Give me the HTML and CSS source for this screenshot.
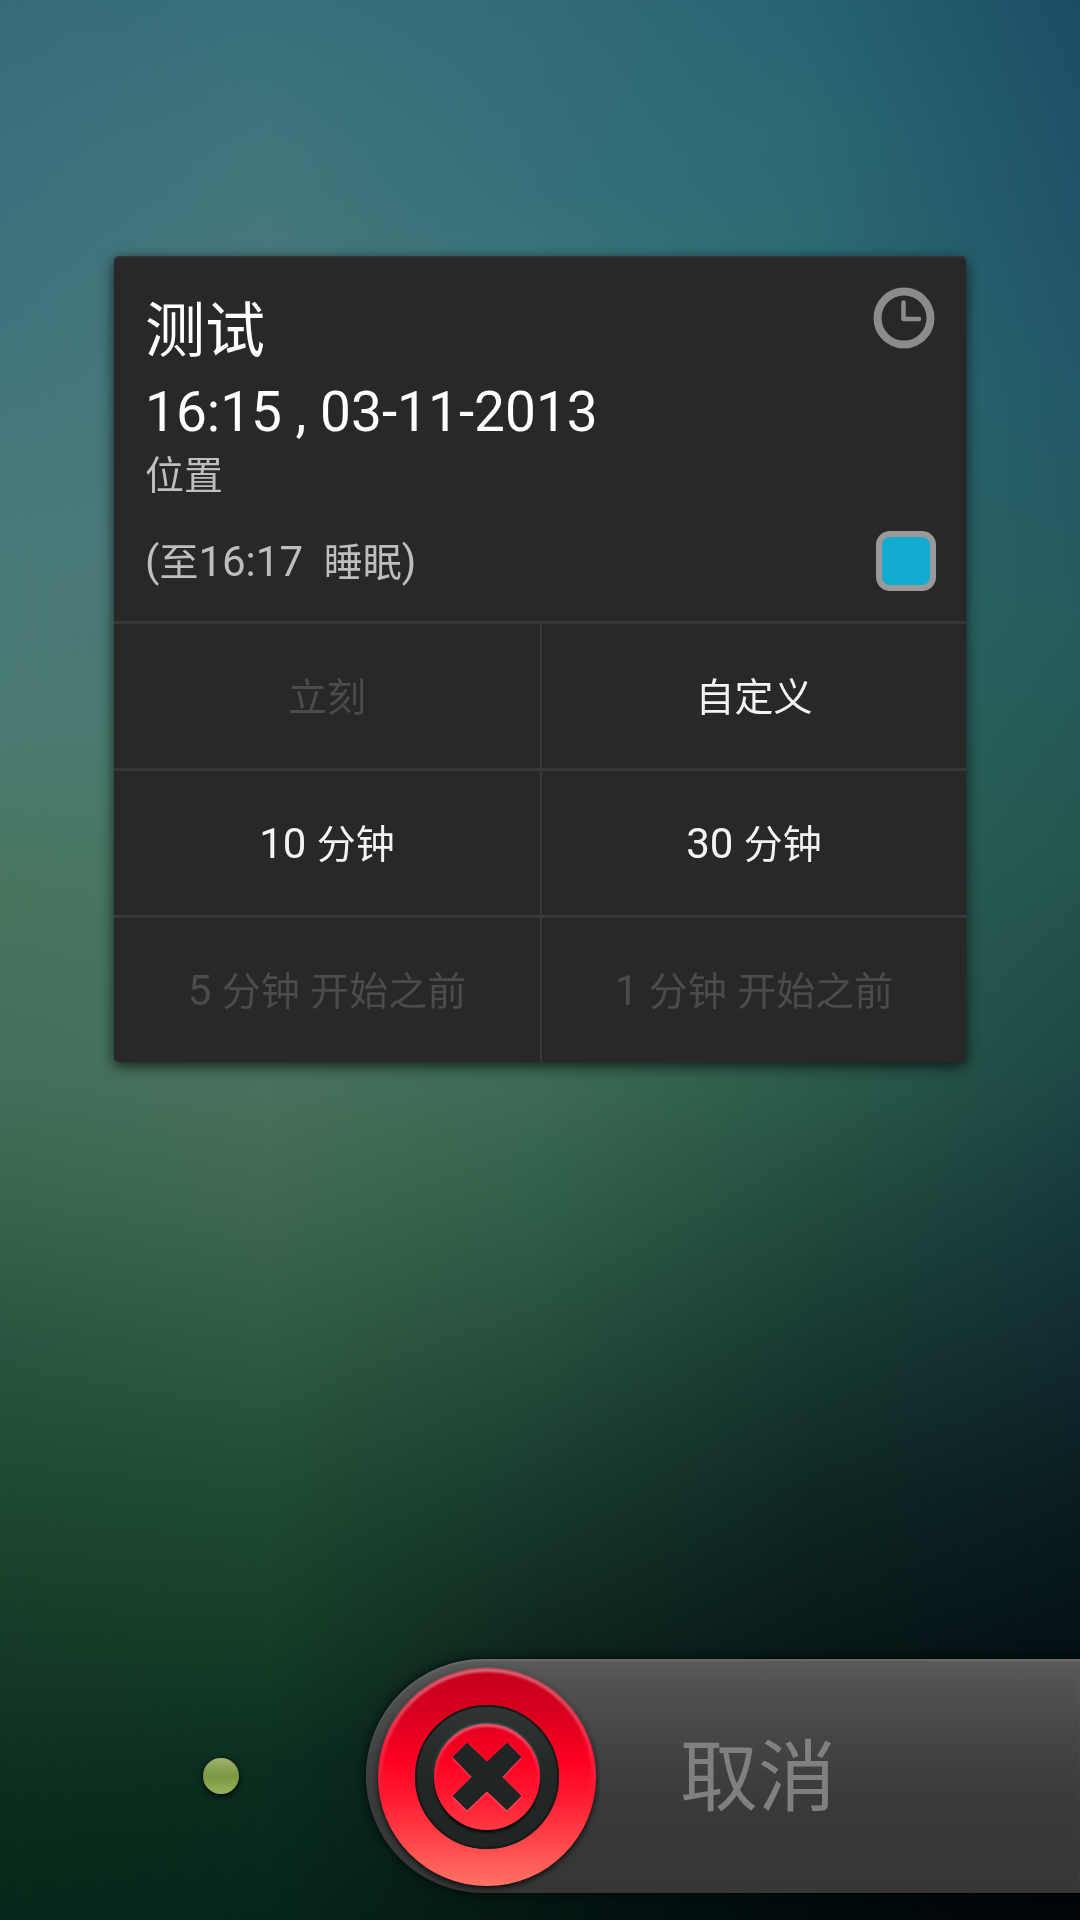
FILE: index.html
```html
<!DOCTYPE html>
<html lang="zh-CN">
<head>
<meta charset="utf-8">
<meta name="viewport" content="width=device-width, initial-scale=1">
<title>测试</title>
<link rel="stylesheet" href="styles.css">
</head>
<body>
<div class="backdrop" aria-hidden="true">
  <div class="wash wash-a"></div>
  <div class="wash wash-b"></div>
  <div class="wash wash-c"></div>
  <div class="wash wash-d"></div>
  <div class="wash wash-e"></div>
</div>
<main class="screen">
  <section class="card">
    <header class="event">
      <div class="event-top">
        <div class="event-text">
          <h1 class="title">测试</h1>
          <p class="date">16:15 , 03-11-2013</p>
          <p class="place">位置</p>
        </div>
        <svg class="clock" viewBox="0 0 64 64" aria-hidden="true">
          <circle cx="32" cy="32" r="26.500" fill="none" stroke="#8b8b8b" stroke-width="8"/>
          <path d="M31.500 16.500V33H47" fill="none" stroke="#8b8b8b" stroke-width="4.500" stroke-linecap="round" stroke-linejoin="round"/>
        </svg>
      </div>
      <div class="event-status">
        <p class="sleep">(<span class="han">至</span>16:17&nbsp; <span class="han">睡眠</span>)</p>
        <span class="swatch"></span>
      </div>
    </header>
    <div class="options">
      <button class="option" type="button" disabled><span class="han">立刻</span></button>
      <button class="option" type="button"><span class="han">自定义</span></button>
      <button class="option" type="button">10 <span class="han">分钟</span></button>
      <button class="option" type="button">30 <span class="han">分钟</span></button>
      <button class="option" type="button" disabled>5 <span class="han">分钟</span> <span class="han">开始之前</span></button>
      <button class="option" type="button" disabled>1 <span class="han">分钟</span> <span class="han">开始之前</span></button>
    </div>
  </section>
  <footer class="dismiss">
    <span class="dot"></span>
    <button class="slider" type="button">
      <svg class="knob" viewBox="0 0 234 234" aria-hidden="true">
        <defs>
          <linearGradient id="red" gradientUnits="userSpaceOnUse" x1="0" y1="9" x2="0" y2="227">
            <stop offset="0" stop-color="#c4001b"/>
            <stop offset=".18" stop-color="#d4001d"/>
            <stop offset=".42" stop-color="#fd0022"/>
            <stop offset=".58" stop-color="#ff1730"/>
            <stop offset=".75" stop-color="#ff3c43"/>
            <stop offset="1" stop-color="#ff7265"/>
          </linearGradient>
          <linearGradient id="rim" x1="0" y1="0" x2="0" y2="1">
            <stop offset="0" stop-color="#fff" stop-opacity=".4"/>
            <stop offset=".6" stop-color="#fff" stop-opacity="0"/>
          </linearGradient>
          <linearGradient id="groove" x1="0" y1="0" x2="0" y2="1">
            <stop offset="0" stop-color="#303635"/>
            <stop offset=".5" stop-color="#222726"/>
            <stop offset="1" stop-color="#202524"/>
          </linearGradient>
          <filter id="soft" x="-20%" y="-20%" width="140%" height="140%"><feGaussianBlur stdDeviation="3"/></filter>
          <filter id="fine" x="-20%" y="-20%" width="140%" height="140%"><feGaussianBlur stdDeviation="1"/></filter>
        </defs>
        <circle cx="121" cy="120" r="109" fill="#000" opacity=".85" filter="url(#soft)"/>
        <circle cx="121" cy="118" r="109" fill="url(#red)"/>
        <circle cx="121" cy="118" r="107" fill="none" stroke="url(#rim)" stroke-width="4" filter="url(#fine)"/>
        <circle cx="121" cy="118" r="72" fill="url(#groove)"/>
        <circle cx="121" cy="118" r="71" fill="none" stroke="#151a19" stroke-width="2"/>
        <circle cx="121" cy="121" r="53" fill="#000" opacity=".7" filter="url(#fine)"/>
        <circle cx="121" cy="118" r="53" fill="url(#red)"/>
        <circle cx="121" cy="118" r="52" fill="none" stroke="url(#rim)" stroke-width="3" filter="url(#fine)"/>
        <g fill="none" stroke-linejoin="round">
          <path id="cross-light" d="M101 86L88 99L107 119L88 138L101 151L121 132L141 151L154 138L135 119L154 99L141 86L121 105Z" fill="#ff7d88" fill-opacity=".7" stroke="#ff7d88" stroke-opacity=".4" stroke-width="3" filter="url(#fine)"/>
          <path d="M101 85L88 98L107 118L88 137L101 150L121 131L141 150L154 137L135 118L154 98L141 85L121 104Z" fill="#202524" stroke="#202524" stroke-width="2"/>
        </g>
      </svg>
      <span class="slider-label">取消</span>
    </button>
  </footer>
</main>
</body>
</html>
```
FILE: styles.css
```css
* { box-sizing: border-box; }

body {
  margin: 0;
  color: #fff;
  background: #0a2b21;
  font-family: Roboto, "Noto Sans CJK SC", sans-serif;
}

h1, p { margin: 0; font-weight: 400; }

button {
  border: 0;
  padding: 0;
  font-family: inherit;
  cursor: pointer;
}

/* Wallpaper: vertical colour ramps that fade into each other from left to right */
.backdrop { position: fixed; inset: 0; z-index: -1; }
.wash { position: absolute; inset: 0; }

.wash-a { background: linear-gradient(#376b7a, #3d707e 8%, #41757c 18%, #497979 28%, #4a7a72 38%, #48765f 46%, #436f5b 56%, #38644c 63%, #295540 70%, #1f4a31 77%, #1a412d 82%, #143725 88%, #0c2f1d 93%, #06281b); }
.wash-b {
  background: linear-gradient(#37707b, #41767c 8%, #47777b 15%, #4b787a 28%, #4a7869 42%, #48705c 57%, #3e674f 63%, #2f5a42 70%, #1f4a32 78%, #163e28 85%, #0c2e20 92%, #06261a);
  mask-image: linear-gradient(to right, transparent, #000 25%);
}
.wash-c {
  background: linear-gradient(#336c78, #35707a 10%, #3b757a 15%, #3c7068 38%, #3c6a54 57%, #305f49 63%, #264d3c 70%, #183a2e 78%, #10281f 85%, #081d19 91%, #041612);
  mask-image: linear-gradient(to right, transparent 25%, #000 50%);
}
.wash-d {
  background: linear-gradient(#276373, #2b6973 7%, #2f6b70 20%, #2c655d 38%, #2b5a49 57%, #224b3d 63%, #183a32 70%, #0f2724 78%, #091a1a 85%, #041112 91%, #020a0d);
  mask-image: linear-gradient(to right, transparent 50%, #000 75%);
}
.wash-e {
  background: linear-gradient(#1c4d64, #205268 10%, #235868 20%, #265c5e 32%, #25564f 44%, #1e4a46 55%, #193f40 60%, #15353a 65%, #122b30 70%, #0a1c20 78%, #051216 85%, #020a0e 91%, #010508);
  mask-image: linear-gradient(to right, transparent 75%, #000);
}

.screen {
  min-height: 100vh;
  padding: 256px 0 27px;
  display: flex;
  flex-direction: column;
  justify-content: space-between;
  overflow: hidden;
}

.card {
  margin: 0 114px;
  border-radius: 5px;
  background: #282828;
  box-shadow: 0 4px 14px rgba(0, 0, 0, .7), inset 0 2px 0 #333;
}

.event { padding: 30px 30px 30px 31px; }
.event-top { display: flex; justify-content: space-between; }
.event-text { padding-top: 4px; }
.title { font-size: 60px; line-height: 84px; }
.date { font-size: 55px; line-height: 76px; }
.place { font-size: 39px; line-height: 52px; color: #bebebe; }
.clock { width: 64px; height: 64px; flex: none; }

.event-status {
  margin-top: 28px;
  display: flex;
  align-items: center;
  justify-content: space-between;
}
.sleep { padding-top: 4px; font-size: 42px; line-height: 56px; color: #bebebe; }
.han { font-size: 39px; }

.swatch {
  width: 60px;
  height: 60px;
  border: 6px solid #999;
  border-radius: 14px;
  background: #13acd0;
}

.options {
  display: grid;
  grid-template-columns: 1fr 1fr;
}
.option {
  height: 147px;
  padding-bottom: 4px;
  border-top: 3px solid #383838;
  background: none;
  color: #f4f4f4;
  font-size: 42px;
}
.option:nth-child(even) { border-left: 2px solid #383838; }
.option:disabled { color: #4b4b4b; cursor: default; }

.dismiss {
  display: flex;
  align-items: center;
}
.dot {
  width: 36px;
  height: 36px;
  margin-left: 203px;
  border-radius: 50%;
  background: linear-gradient(#a0b36f, #7c9741 50%, #95b45a);
  box-shadow: 0 2px 6px rgba(0, 0, 0, .9);
}
.slider {
  flex: 1;
  margin-left: 127px;
  display: flex;
  align-items: center;
  gap: 80px;
  border-radius: 117px 0 0 117px;
  background: linear-gradient(#5a5b5a, #505251 12%, #424444 38%, #393b3b 60%, #353635);
  box-shadow: 0 0 12px rgba(0, 0, 0, .8), inset 0 2px 2px rgba(255, 255, 255, .1);
}
.knob { width: 234px; height: 234px; flex: none; }
.slider-label { padding-top: 6px; font-size: 78px; line-height: 112px; color: #808080; }
```
